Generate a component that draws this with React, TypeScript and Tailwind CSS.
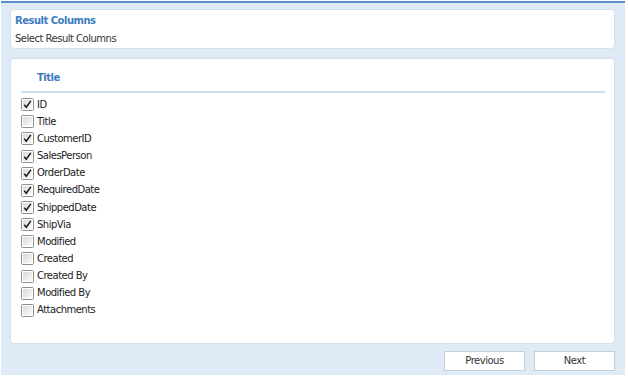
import React from "react";

const items: [string, boolean][] = [
  ["ID", true],
  ["Title", false],
  ["CustomerID", true],
  ["SalesPerson", true],
  ["OrderDate", true],
  ["RequiredDate", true],
  ["ShippedDate", true],
  ["ShipVia", true],
  ["Modified", false],
  ["Created", false],
  ["Created By", false],
  ["Modified By", false],
  ["Attachments", false],
];

function Box({ checked }: { checked: boolean }) {
  return (
    <svg width="13" height="13" viewBox="0 0 13 13" className="shrink-0">
      <defs>
        <linearGradient id="cbg" x1="0" y1="0" x2="1" y2="1">
          <stop offset="0" stopColor="#d9d9d9" />
          <stop offset="1" stopColor="#fbfbfb" />
        </linearGradient>
      </defs>
      <rect x="0.5" y="0.5" width="12" height="12" rx="1" fill="#fff" stroke="#8e8f8f" />
      <rect x="2" y="2" width="9" height="9" fill="url(#cbg)" />
      {checked && (
        <path d="M3.2 6.8 L5.3 9.3 L9.8 2.9" fill="none" stroke="#1a1a1a" strokeWidth="1.5" />
      )}
    </svg>
  );
}

export default function App() {
  return (
    <div
      className="w-[628px] h-[377px] bg-white overflow-hidden"
      style={{ fontFamily: '"DejaVu Sans", Verdana, sans-serif' }}
    >
      <div className="ml-[1px] mr-[3px] h-[374px] bg-[#deeaf5] border-t-[2px] border-[#5a8fc8] mt-[1px] pl-[9px] pr-[10px] pt-[6px] flex flex-col tracking-[-0.5px]">
        <div className="h-[40px] bg-white rounded-[4px] border border-[#d3e1ee] pl-[4px] pt-[4px] flex flex-col">
          <div className="text-[10px] font-bold text-[#3d7cc0] leading-[14px]">Result Columns</div>
          <div className="text-[10px] text-[#333] leading-[14px] mt-[4px]">Select Result Columns</div>
        </div>
        <div className="mt-[9px] h-[286px] bg-white rounded-[4px] border border-[#d3e1ee] pl-[10px] pr-[9px] pt-[12px]">
          <div className="pl-[16px] text-[10px] font-bold text-[#3d7cc0] leading-[14px] h-[20px]">Title</div>
          <div className="h-[2px] bg-[#cddff0]" />
          <div className="pt-[3px] flex flex-col">
            {items.map(([label, checked]) => (
              <div key={label} className="h-[17.17px] flex items-center gap-[3px]">
                <Box checked={checked} />
                <span className="text-[10px] text-[#222] leading-[12px]">{label}</span>
              </div>
            ))}
          </div>
        </div>
        <div className="mt-[7px] flex justify-end gap-[9px]">
          <button className="w-[81px] h-[20px] bg-white border border-[#c9ccd0] text-[10px] text-[#333] leading-[18px]">Previous</button>
          <button className="w-[81px] h-[20px] bg-white border border-[#c9ccd0] text-[10px] text-[#333] leading-[18px]">Next</button>
        </div>
      </div>
    </div>
  );
}
